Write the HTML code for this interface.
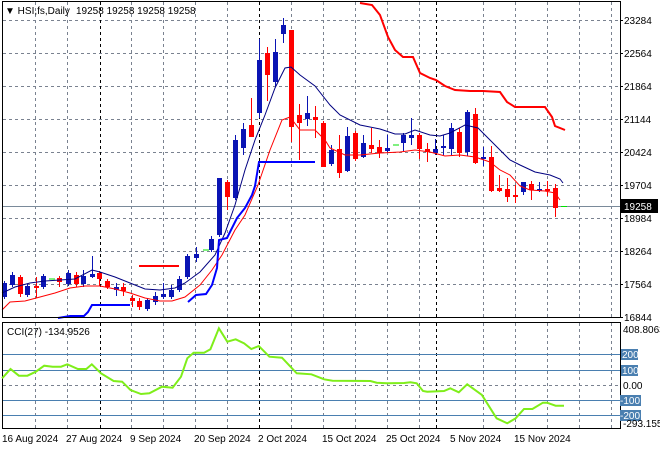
<!DOCTYPE html>
<html><head><meta charset="utf-8"><style>
html,body{margin:0;padding:0;background:#fff;width:660px;height:450px;overflow:hidden}
svg{display:block}
text{font-family:"Liberation Sans",sans-serif;font-size:10px;fill:#000}
</style></head><body>
<svg width="660" height="450" viewBox="0 0 660 450" xmlns="http://www.w3.org/2000/svg">
<rect width="660" height="450" fill="#fff"/>
<g stroke="#7a8290" stroke-width="1" stroke-dasharray="3,3" fill="none">
<path d="M3 20.5H620M3 53.5H620M3 86.5H620M3 119.5H620M3 152.5H620M3 185.5H620M3 218.5H620M3 251.5H620M3 284.5H620"/>
<path d="M35.5 2V317M67.5 2V317M131.5 2V317M163.5 2V317M195.5 2V317M227.5 2V317M291.5 2V317M323.5 2V317M355.5 2V317M387.5 2V317M419.5 2V317M483.5 2V317M515.5 2V317M547.5 2V317M579.5 2V317M611.5 2V317"/>
<path d="M35.5 323V428M67.5 323V428M131.5 323V428M163.5 323V428M195.5 323V428M227.5 323V428M291.5 323V428M323.5 323V428M355.5 323V428M387.5 323V428M419.5 323V428M483.5 323V428M515.5 323V428M547.5 323V428M579.5 323V428M611.5 323V428M3 385.5H620"/>
</g>
<g stroke="#000" stroke-width="1" stroke-dasharray="3,3">
<path d="M100.5 2V317M259.5 2V317M436.5 2V317M100.5 323V428M259.5 323V428M436.5 323V428"/>
</g>
<path d="M3 206.5H620" stroke="#7a8a9a" stroke-width="1"/>
<g id="c"></g>
<polyline fill="none" stroke="#f00" stroke-width="1" points="2,310 10,302 25,301 40,297 55,293 70,288 85,286 100,286 115,289 130,293 145,298 160,301 172,301 185,297 200,285 212,270 222,255 235,230 245,215 258,185 270,150 282,120 290,117 300,130 315,130 325,140 330,148 345,155 360,155 380,153 400,152 415,150 430,152 445,156 460,155 475,157 490,162 500,170 510,175 520,186 530,190 545,191 555,193 560,200"/>
<polyline fill="none" stroke="#000080" stroke-width="1" points="2,293 15,287 30,283 45,281 60,280 75,279 92,270 100,272 115,277 130,283 145,289 160,290 175,288 185,283 200,272 215,255 225,233 235,205 245,170 255,140 265,115 275,88 285,68 291,67 300,75 315,86 330,105 340,115 360,125 380,129 395,134 405,134 415,130 430,135 440,136 450,133 465,125 478,128 490,140 500,150 510,160 520,165 535,172 550,175 560,179 563,183"/>
<polyline fill="none" stroke="#f00" stroke-width="2" points="360,3 372,5 380,15 388,37 395,50 403,57 413,57 420,73 430,78 436,80 445,86 455,90 470,91 483,91 500,92 507,102 515,107 545,107 552,117 555,126 565,130"/>
<path d="M139 266H179" stroke="#f00" stroke-width="2"/>
<polyline fill="none" stroke="#0000ff" stroke-width="2" points="58,318 70,316 84,316 88,312 92,305 130,305"/>
<polyline fill="none" stroke="#0000ff" stroke-width="2" points="188,302 196,295 206,294 212,285 217,268 219,240 227,238 237,218 245,208 252,195 255,186 259,162 315,162"/>
<path d="M49 279H55M203 250H209M393 145H399M561 206.5H567" stroke="#00e000" stroke-width="1"/>
<rect x="2.5" y="1.5" width="618" height="316" fill="none" stroke="#000"/>
<rect x="2.5" y="322.5" width="618" height="106" fill="none" stroke="#000"/>
<path d="M3 354.5H620M3 370.5H620M3 400.5H620M3 415.5H620" stroke="#4a7fb0" stroke-width="1"/>
<polyline id="cci" fill="none" stroke="#7fee1a" stroke-width="2" points=""/>
<g stroke="#000"><path d="M620 20.5h3M620 53.5h3M620 86.5h3M620 119.5h3M620 152.5h3M620 185.5h3M620 218.5h3M620 251.5h3M620 284.5h3M620 317.5h3"/></g>
<g>
<text x="624" y="24">23284</text><text x="624" y="57">22564</text><text x="624" y="90">21864</text><text x="624" y="123">21144</text><text x="624" y="156">20424</text><text x="624" y="189">19704</text><text x="624" y="222">18984</text><text x="624" y="255">18264</text><text x="624" y="288">17564</text><text x="624" y="321">16844</text>
</g>
<rect x="620" y="199" width="38" height="14" fill="#000"/>
<text x="624" y="210" style="fill:#fff">19258</text>
<text x="5" y="14">▼ HSI,fs,Daily</text>
<text x="76" y="14">19258 19258 19258 19258</text>
<text x="7" y="335">CCI(27) -134.9526</text>
<text x="623" y="333">408.8063</text>
<rect x="621" y="349" width="17" height="11" fill="#4a7fb0"/><text x="622" y="358" style="fill:#fff">200</text>
<rect x="621" y="365" width="17" height="11" fill="#4a7fb0"/><text x="622" y="374" style="fill:#fff">100</text>
<text x="623" y="389">0.00</text>
<rect x="620" y="395" width="21" height="11" fill="#4a7fb0"/><text x="620" y="404" style="fill:#fff">-100</text>
<rect x="620" y="410" width="21" height="11" fill="#4a7fb0"/><text x="620" y="419" style="fill:#fff">-200</text>
<text x="623" y="427">-293.1559</text>
<g>
<text x="2" y="442">16 Aug 2024</text><text x="66" y="442">27 Aug 2024</text><text x="130" y="442">9 Sep 2024</text><text x="194" y="442">20 Sep 2024</text><text x="258" y="442">2 Oct 2024</text><text x="322" y="442">15 Oct 2024</text><text x="386" y="442">25 Oct 2024</text><text x="450" y="442">5 Nov 2024</text><text x="514" y="442">15 Nov 2024</text>
</g>
</svg>
<script>
var C=[[4,283,297,281,299,'b'],[12,275,285,272,287,'b'],[20,277,294,275,297,'r'],[27,286,295,284,297,'b'],[36,286,288,277,298,'r'],[43,276,287,274,289,'b'],
[59,278,282,276,287,'r'],[68,273,284,270,286,'b'],[76,275,284,272,287,'r'],[83,276,284,270,287,'b'],[92,274,277,256,278,'b'],[99,273,279,271,286,'r'],
[107,281,287,279,289,'r'],[116,287,290,283,296,'b'],[123,287,291,283,296,'r'],[132,298,301,295,307,'r'],[139,301,307,298,310,'r'],[147,300,309,298,311,'b'],
[155,296,302,292,305,'b'],[163,294,297,283,299,'b'],[171,290,297,285,299,'b'],[179,279,290,276,292,'b'],[187,256,277,254,279,'b'],[196,254,258,247,262,'b'],
[211,239,250,236,252,'b'],[219,178,235,178,237,'b'],[227,182,197,180,210,'r'],[235,140,198,135,200,'b'],[243,129,148,123,155,'b'],[251,125,137,98,137,'r'],
[259,60,113,39,118,'b'],[267,53,75,47,101,'r'],[275,52,82,39,87,'b'],[283,25,34,18,43,'b'],[291,30,127,30,142,'r'],[299,115,123,104,160,'r'],
[307,113,119,96,126,'b'],[315,117,120,106,138,'r'],[323,123,167,121,167,'r'],[331,150,164,145,166,'b'],[339,149,173,135,178,'r'],[347,136,171,127,172,'b'],
[355,133,159,131,161,'r'],[363,143,157,135,158,'b'],[371,145,149,128,153,'r'],[379,147,153,140,158,'r'],[387,148,151,135,153,'b'],[403,135,143,133,151,'b'],
[411,135,138,118,145,'b'],[419,135,149,133,159,'r'],[427,149,152,143,162,'r'],[435,149,153,139,155,'b'],[443,146,148,135,155,'b'],[451,128,149,123,155,'b'],
[459,132,153,128,157,'r'],[467,112,152,110,156,'b'],[475,114,163,108,164,'r'],[483,157,158,147,166,'b'],[491,157,191,146,192,'r'],[499,188,191,175,192,'r'],
[507,189,197,178,202,'r'],[515,195,197,185,203,'r'],[523,182,192,182,195,'b'],[531,184,190,181,200,'r'],[539,189,191,182,192,'b'],[547,189,191,181,196,'r'],[555,188,208,184,217,'r']];
var s='';
C.forEach(function(c){var col=c[5]=='b'?'#0a14b4':'#ff0000';
s+='<rect x="'+c[0]+'" y="'+c[3]+'" width="1" height="'+(c[4]-c[3])+'" fill="'+col+'"/>';
s+='<rect x="'+(c[0]-2)+'" y="'+c[1]+'" width="5" height="'+Math.max(2,c[2]-c[1])+'" fill="'+col+'"/>';});
document.getElementById('c').innerHTML=s;
var P=[[5,190],[25,162],[45,182],[65,182],[85,170],[105,152],[125,155],[145,155],[160,148],[185,162],[205,162],[218,148],[240,175],[270,198],[290,200],[310,225],[335,237],[355,235],[385,215],[410,218],[430,185],[445,130],[460,113],[485,113],[500,103],[520,40],[540,80],[560,73],[580,85],[597,102],[615,93],[640,125],[670,128],[705,175],[740,178],[770,193],[790,197],[880,198],[895,203],[920,205],[960,204],[975,202],[990,205],[1005,228],[1015,230],[1055,228],[1070,220],[1090,232],[1110,208],[1145,240],[1180,310],[1205,325],[1225,310],[1245,282],[1265,282],[1290,263],[1300,263],[1320,272],[1340,272]];
document.getElementById('cci').setAttribute('points',P.map(function(p){return (p[0]/2.376).toFixed(1)+','+(315+p[1]/3).toFixed(1)}).join(' '));
</script>
</body></html>
